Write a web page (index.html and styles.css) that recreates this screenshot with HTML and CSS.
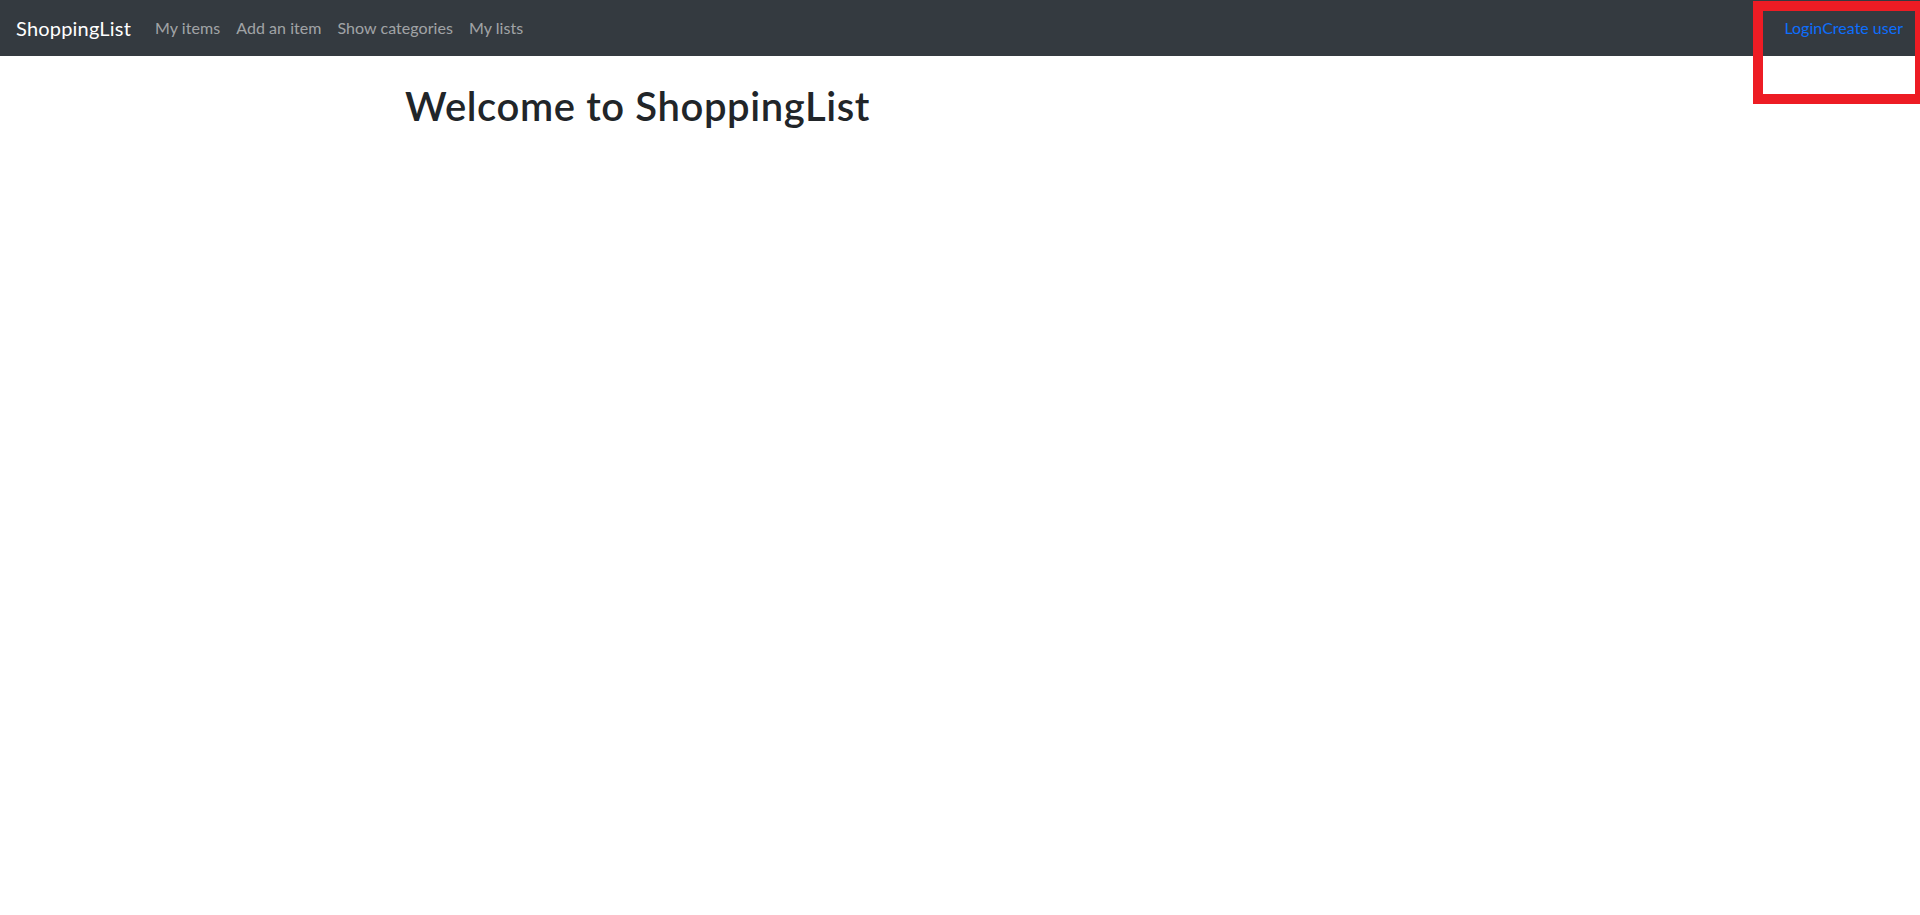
FILE: index.html
```html
<!DOCTYPE html>
<html lang="en">
<head>
<meta charset="utf-8">
<title>ShoppingList</title>
<link rel="stylesheet" href="styles.css">
</head>
<body>
<nav class="navbar">
  <a class="brand" href="#">ShoppingList</a>
  <ul class="nav-links">
    <li><a class="nav-link" href="#">My items</a></li>
    <li><a class="nav-link" href="#">Add an item</a></li>
    <li><a class="nav-link" href="#">Show categories</a></li>
    <li><a class="nav-link" href="#">My lists</a></li>
  </ul>
  <div class="auth-links">
    <a class="auth-link" href="#">Login</a><a class="auth-link" href="#">Create user</a>
  </div>
</nav>
<div class="highlight"></div>
<main class="container">
  <h1 class="title">Welcome to ShoppingList</h1>
</main>
</body>
</html>
```

FILE: styles.css
```css
* { box-sizing: border-box; }
html, body { margin: 0; padding: 0; }
body {
  font-family: Lato, "Open Sans", "Liberation Sans", sans-serif;
  font-size: 16px;
  line-height: 1.5;
  color: #212529;
  background: #fff;
  position: relative;
  min-height: 915px;
}
a { text-decoration: none; }
.navbar {
  display: flex;
  align-items: center;
  height: 56px;
  padding: 8px 17px 8px 16px;
  background: #343a40;
}
.brand {
  font-size: 20px;
  line-height: 30px;
  color: #fff;
  margin-right: 16px;
  letter-spacing: 0.2px;
}
.nav-links {
  display: flex;
  list-style: none;
  margin: 0;
  padding: 0;
}
.nav-link {
  display: block;
  padding: 8px;
  color: rgba(255, 255, 255, 0.55);
  letter-spacing: 0.05px;
}
.auth-links {
  margin-left: auto;
  display: flex;
}
.auth-link { color: #0d6efd; }
.highlight {
  position: absolute;
  top: 1px;
  left: 1753px;
  width: 172px;
  height: 103px;
  border: 10px solid #ed1c24;
  pointer-events: none;
}
.container {
  max-width: 1140px;
  margin: 0 auto;
  padding: 0 15px;
}
.title {
  margin: 26px 0 8px;
  font-size: 40px;
  font-weight: 600;
  line-height: 1.2;
  letter-spacing: 0.6px;
}
```
